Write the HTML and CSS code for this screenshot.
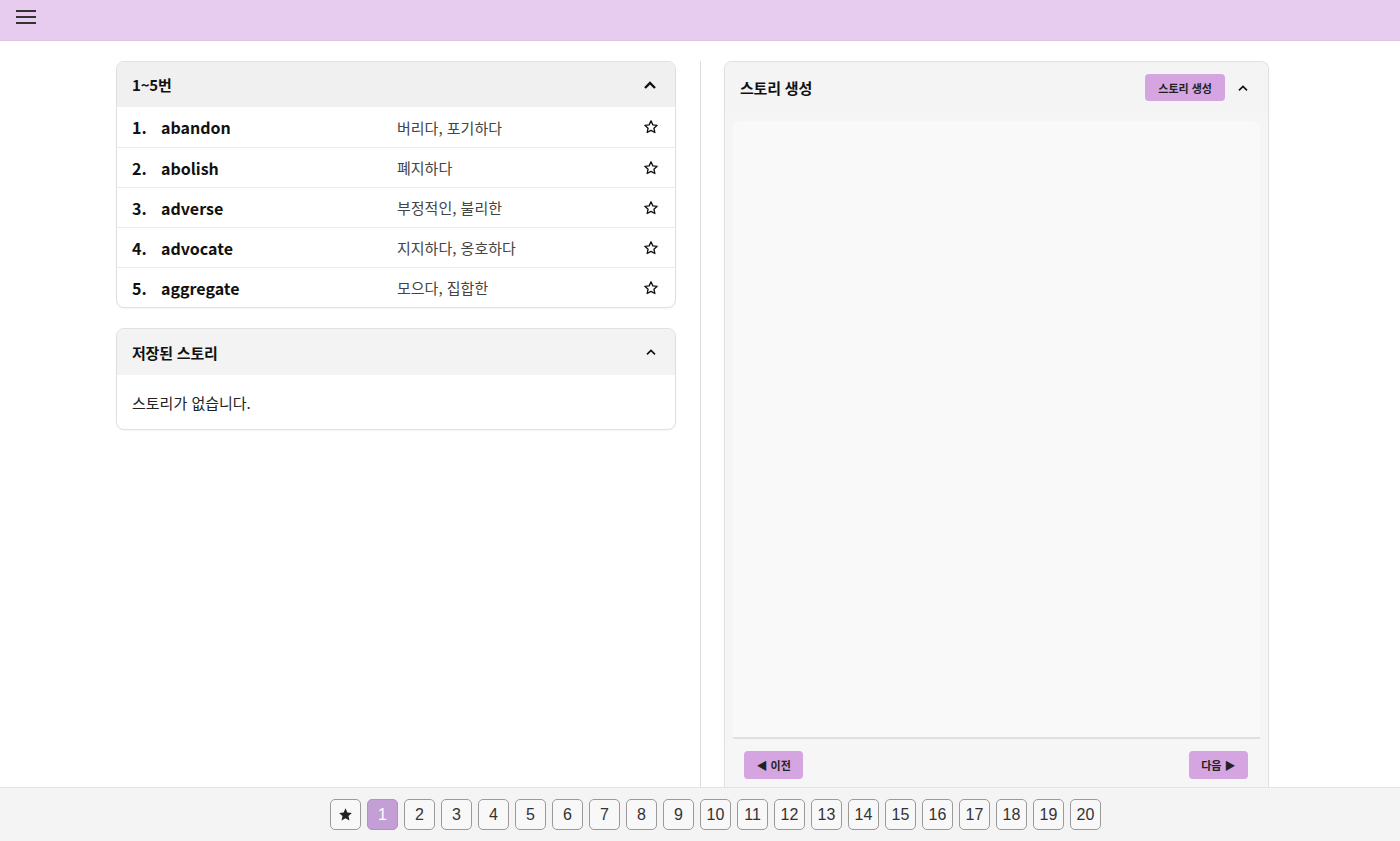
FILE: index.html
```html
<!DOCTYPE html>
<html lang="ko">
<head>
<meta charset="utf-8">
<title>단어장</title>
<link rel="stylesheet" href="styles.css">
</head>
<body>
<header class="topbar">
  <button class="menu-btn" aria-label="메뉴">
    <svg width="22" height="16" viewBox="0 0 22 16"><path d="M1 2h20M1 8h20M1 14h20" stroke="#333" stroke-width="2.2" fill="none"/></svg>
  </button>
</header>

<main class="main">
  <section class="left-col">
    <div class="card">
      <div class="card-head">
        <span class="card-title">1~5번</span>
        <svg class="chev" width="14" height="10" viewBox="0 0 14 10"><path d="M2 8l5-5 5 5" stroke="#111" stroke-width="2.4" fill="none"/></svg>
      </div>
      <ul class="word-list">
        <li class="word-row"><span class="num">1.</span><span class="word">abandon</span><span class="mean">버리다, 포기하다</span><svg class="star" width="16" height="16" viewBox="0 0 24 24"><path d="M12 2.8l2.8 6 6.5.7-4.9 4.4 1.4 6.4L12 17l-5.8 3.3 1.4-6.4-4.9-4.4 6.5-.7z" fill="none" stroke="#111" stroke-width="2" stroke-linejoin="round"/></svg></li>
        <li class="word-row"><span class="num">2.</span><span class="word">abolish</span><span class="mean">폐지하다</span><svg class="star" width="16" height="16" viewBox="0 0 24 24"><path d="M12 2.8l2.8 6 6.5.7-4.9 4.4 1.4 6.4L12 17l-5.8 3.3 1.4-6.4-4.9-4.4 6.5-.7z" fill="none" stroke="#111" stroke-width="2" stroke-linejoin="round"/></svg></li>
        <li class="word-row"><span class="num">3.</span><span class="word">adverse</span><span class="mean">부정적인, 불리한</span><svg class="star" width="16" height="16" viewBox="0 0 24 24"><path d="M12 2.8l2.8 6 6.5.7-4.9 4.4 1.4 6.4L12 17l-5.8 3.3 1.4-6.4-4.9-4.4 6.5-.7z" fill="none" stroke="#111" stroke-width="2" stroke-linejoin="round"/></svg></li>
        <li class="word-row"><span class="num">4.</span><span class="word">advocate</span><span class="mean">지지하다, 옹호하다</span><svg class="star" width="16" height="16" viewBox="0 0 24 24"><path d="M12 2.8l2.8 6 6.5.7-4.9 4.4 1.4 6.4L12 17l-5.8 3.3 1.4-6.4-4.9-4.4 6.5-.7z" fill="none" stroke="#111" stroke-width="2" stroke-linejoin="round"/></svg></li>
        <li class="word-row"><span class="num">5.</span><span class="word">aggregate</span><span class="mean">모으다, 집합한</span><svg class="star" width="16" height="16" viewBox="0 0 24 24"><path d="M12 2.8l2.8 6 6.5.7-4.9 4.4 1.4 6.4L12 17l-5.8 3.3 1.4-6.4-4.9-4.4 6.5-.7z" fill="none" stroke="#111" stroke-width="2" stroke-linejoin="round"/></svg></li>
      </ul>
    </div>

    <div class="card saved">
      <div class="card-head light">
        <span class="card-title">저장된 스토리</span>
        <svg class="chev" width="12" height="8" viewBox="0 0 14 10"><path d="M2 8l5-5 5 5" stroke="#111" stroke-width="2" fill="none"/></svg>
      </div>
      <div class="card-body">스토리가 없습니다.</div>
    </div>
  </section>

  <div class="divider"></div>

  <section class="right-col">
    <div class="card story">
      <div class="card-head story-head">
        <span class="card-title">스토리 생성</span>
        <div class="head-actions">
          <button class="pill">스토리 생성</button>
          <svg class="chev" width="12" height="8" viewBox="0 0 14 10"><path d="M2 8l5-5 5 5" stroke="#111" stroke-width="2" fill="none"/></svg>
        </div>
      </div>
      <div class="story-area"></div>
      <div class="story-foot">
        <button class="pill small">◀ 이전</button>
        <button class="pill small">다음 ▶</button>
      </div>
    </div>
  </section>
</main>

<footer class="pager">
  <button class="pg star-pg"><svg width="15" height="15" viewBox="0 0 24 24"><path d="M12 2l3 6.6 7.2.8-5.4 4.9 1.5 7.1L12 17.8l-6.3 3.6 1.5-7.1L1.8 9.4 9 8.6z" fill="#222"/></svg></button>
  <button class="pg active">1</button>
  <button class="pg">2</button>
  <button class="pg">3</button>
  <button class="pg">4</button>
  <button class="pg">5</button>
  <button class="pg">6</button>
  <button class="pg">7</button>
  <button class="pg">8</button>
  <button class="pg">9</button>
  <button class="pg">10</button>
  <button class="pg">11</button>
  <button class="pg">12</button>
  <button class="pg">13</button>
  <button class="pg">14</button>
  <button class="pg">15</button>
  <button class="pg">16</button>
  <button class="pg">17</button>
  <button class="pg">18</button>
  <button class="pg">19</button>
  <button class="pg">20</button>
</footer>
</body>
</html>
```

FILE: styles.css
```css
* { box-sizing: border-box; }
html, body { height: 100%; }
body {
  margin: 0;
  font-family: "Noto Sans CJK KR", "Noto Sans", sans-serif;
  color: #111;
  background: #fff;
  display: flex;
  flex-direction: column;
  height: 841px;
  overflow: hidden;
}
ul { list-style: none; margin: 0; padding: 0; }
button { font-family: inherit; cursor: pointer; }

.topbar {
  height: 41px;
  flex: none;
  background: #e8ccf0;
  border-bottom: 1px solid #dcc3e4;
  display: flex;
  align-items: center;
  padding-left: 15px;
}
.menu-btn {
  border: 0;
  background: transparent;
  padding: 0;
  display: flex;
  margin-top: -6px;
}

.main {
  flex: 1;
  min-height: 0;
  display: flex;
  padding: 20px 0 0 116px;
  overflow: hidden;
}
.left-col {
  width: 560px;
  flex: none;
  display: flex;
  flex-direction: column;
  gap: 20px;
}
.divider {
  width: 1px;
  background: #ddd;
  margin: 0 23px 0 24px;
  flex: none;
}
.right-col {
  width: 545px;
  flex: none;
  display: flex;
  flex-direction: column;
}

.card {
  border: 1px solid #e0e0e0;
  border-radius: 8px;
  background: #fff;
  overflow: hidden;
  box-shadow: 0 1px 2px rgba(0,0,0,0.04);
}
.card-head {
  height: 45px;
  background: #f0f0f0;
  display: flex;
  align-items: center;
  justify-content: space-between;
  padding: 0 16px 0 15px;
}
.card-head.light { background: #f3f3f3; height: 46px; }
.card-title {
  font-size: 15px;
  font-weight: 700;
  letter-spacing: -0.2px;
}
.chev { margin-right: 2px; }

.word-row {
  height: 40px;
  display: flex;
  align-items: center;
  padding: 0 16px 0 15px;
  border-top: 1px solid #ececec;
}
.word-row:first-child { border-top: 0; }
.num {
  width: 29px;
  font-size: 16px;
  font-weight: 700;
}
.word {
  width: 236px;
  font-size: 16px;
  font-weight: 700;
}
.mean {
  flex: 1;
  font-size: 15px;
  color: #444;
}

.card-body {
  height: 54px;
  padding: 0 15px;
  display: flex;
  align-items: center;
  font-size: 15px;
  color: #222;
}

.story {
  flex: 1;
  display: flex;
  flex-direction: column;
  border-bottom-left-radius: 0;
  border-bottom-right-radius: 0;
  border-bottom: 0;
  background: #f5f5f5;
}
.story-head {
  height: 51px;
  background: #f4f4f4;
  padding-right: 17px;
}
.head-actions {
  display: flex;
  align-items: center;
  gap: 12px;
}
.pill {
  border: 0;
  background: #d4a5e0;
  color: #222;
  border-radius: 4px;
  font-size: 11px;
  font-weight: 700;
  height: 27px;
  padding: 0 13px;
}
.pill.small { height: 28px; padding: 0 12.5px; font-size: 11px; }
.story-area {
  flex: 1;
  margin: 8px 8px 0 8px;
  background: #f9f9f9;
  border-radius: 6px 6px 0 0;
  border-bottom: 2px solid #e0e0e0;
}
.story-foot {
  height: 48px;
  flex: none;
  display: flex;
  justify-content: space-between;
  align-items: flex-start;
  padding: 12px 20px 0 19px;
  background: #f6f6f6;
}

.pager {
  height: 54px;
  flex: none;
  background: #f4f4f4;
  border-top: 1px solid #e4e4e4;
  display: flex;
  justify-content: center;
  align-items: center;
  gap: 6px;
  padding-left: 31px;
}
.pg {
  width: 31px;
  height: 31px;
  border: 1.5px solid #9a9a9a;
  border-radius: 5px;
  background: #f8f8f8;
  font-family: "Liberation Sans", Arial, sans-serif;
  font-size: 16px;
  color: #333;
  padding: 0;
  display: flex;
  align-items: center;
  justify-content: center;
}
.pg.active {
  background: #c39fd6;
  border-color: #b68fca;
  color: #fff;
}
```
